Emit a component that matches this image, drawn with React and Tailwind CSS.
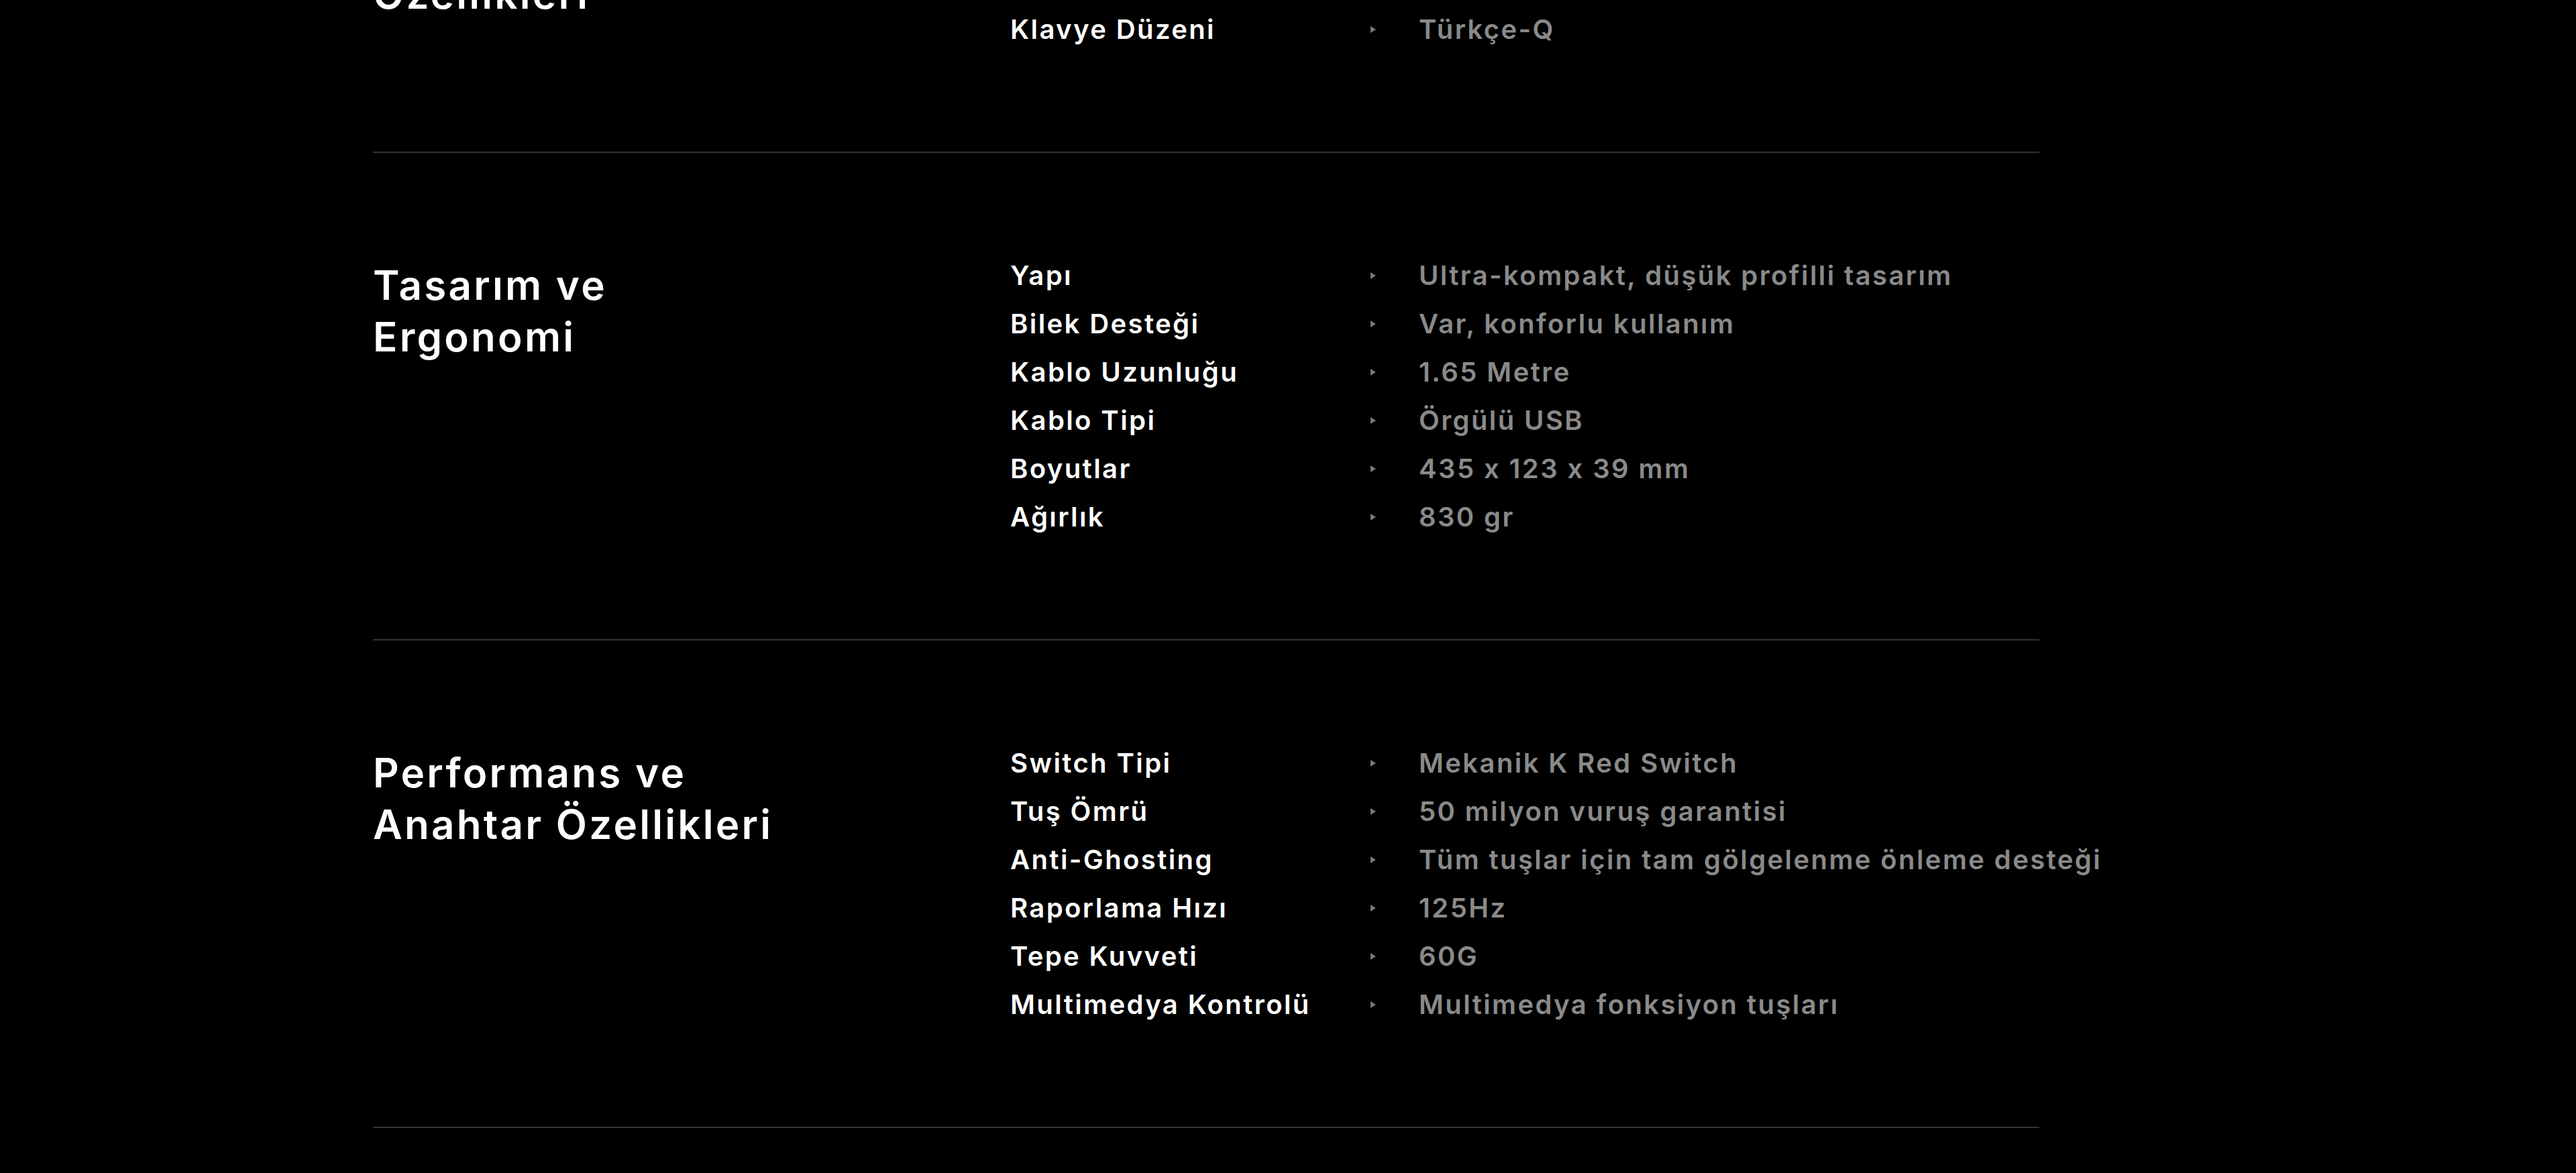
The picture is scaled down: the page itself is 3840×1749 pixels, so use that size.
import React from "react";

const sections = [
  {
    title: ["Genel", "Özellikleri"],
    rows: [
      ["Bağlantı", "Kablolu USB"],
      ["Tuş Sayısı", "104 Tuş"],
      ["Klavye Düzeni", "Türkçe-Q"],
    ],
  },
  {
    title: ["Tasarım ve", "Ergonomi"],
    rows: [
      ["Yapı", "Ultra-kompakt, düşük profilli tasarım"],
      ["Bilek Desteği", "Var, konforlu kullanım"],
      ["Kablo Uzunluğu", "1.65 Metre"],
      ["Kablo Tipi", "Örgülü USB"],
      ["Boyutlar", "435 x 123 x 39 mm"],
      ["Ağırlık", "830 gr"],
    ],
  },
  {
    title: ["Performans ve", "Anahtar Özellikleri"],
    rows: [
      ["Switch Tipi", "Mekanik K Red Switch"],
      ["Tuş Ömrü", "50 milyon vuruş garantisi"],
      ["Anti-Ghosting", "Tüm tuşlar için tam gölgelenme önleme desteği"],
      ["Raporlama Hızı", "125Hz"],
      ["Tepe Kuvveti", "60G"],
      ["Multimedya Kontrolü", "Multimedya fonksiyon tuşları"],
    ],
  },
];

const Arrow = () => (
  <svg width="10" height="10" viewBox="0 0 10 10" className="shrink-0">
    <path d="M1 0 L9 5 L1 10 Z" fill="#7a7a7a" />
  </svg>
);

const SpecSection = ({ title, rows }) => (
  <section className="flex border-b-2 border-[#333333] pt-[147px] pb-[146px]">
    {/* Section title */}
    <h2 className="w-[950px] shrink-0 mt-[12px] text-[60px] leading-[77px] font-semibold tracking-[0.055em] text-white">
      {title[0]}
      <br />
      {title[1]}
    </h2>

    {/* Spec rows */}
    <div className="flex flex-col">
      {rows.map(([label, value]) => (
        <div
          key={label}
          className="flex items-center h-[72px] text-[40px] font-semibold tracking-[0.06em] whitespace-nowrap"
        >
          <span className="w-[536px] shrink-0 text-white">{label}</span>
          <Arrow />
          <span className="ml-[63px] text-[#8a8a8a]">{value}</span>
        </div>
      ))}
    </div>
  </section>
);

export default function App() {
  return (
    <div
      className="w-[3840px] h-[1749px] bg-black overflow-hidden"
      style={{ fontFamily: "Inter, 'Noto Sans', sans-serif" }}
    >
      <div className="ml-[556px] w-[2484px] -mt-[283px]">
        {sections.map((s) => (
          <SpecSection key={s.title.join(" ")} title={s.title} rows={s.rows} />
        ))}
      </div>
    </div>
  );
}
